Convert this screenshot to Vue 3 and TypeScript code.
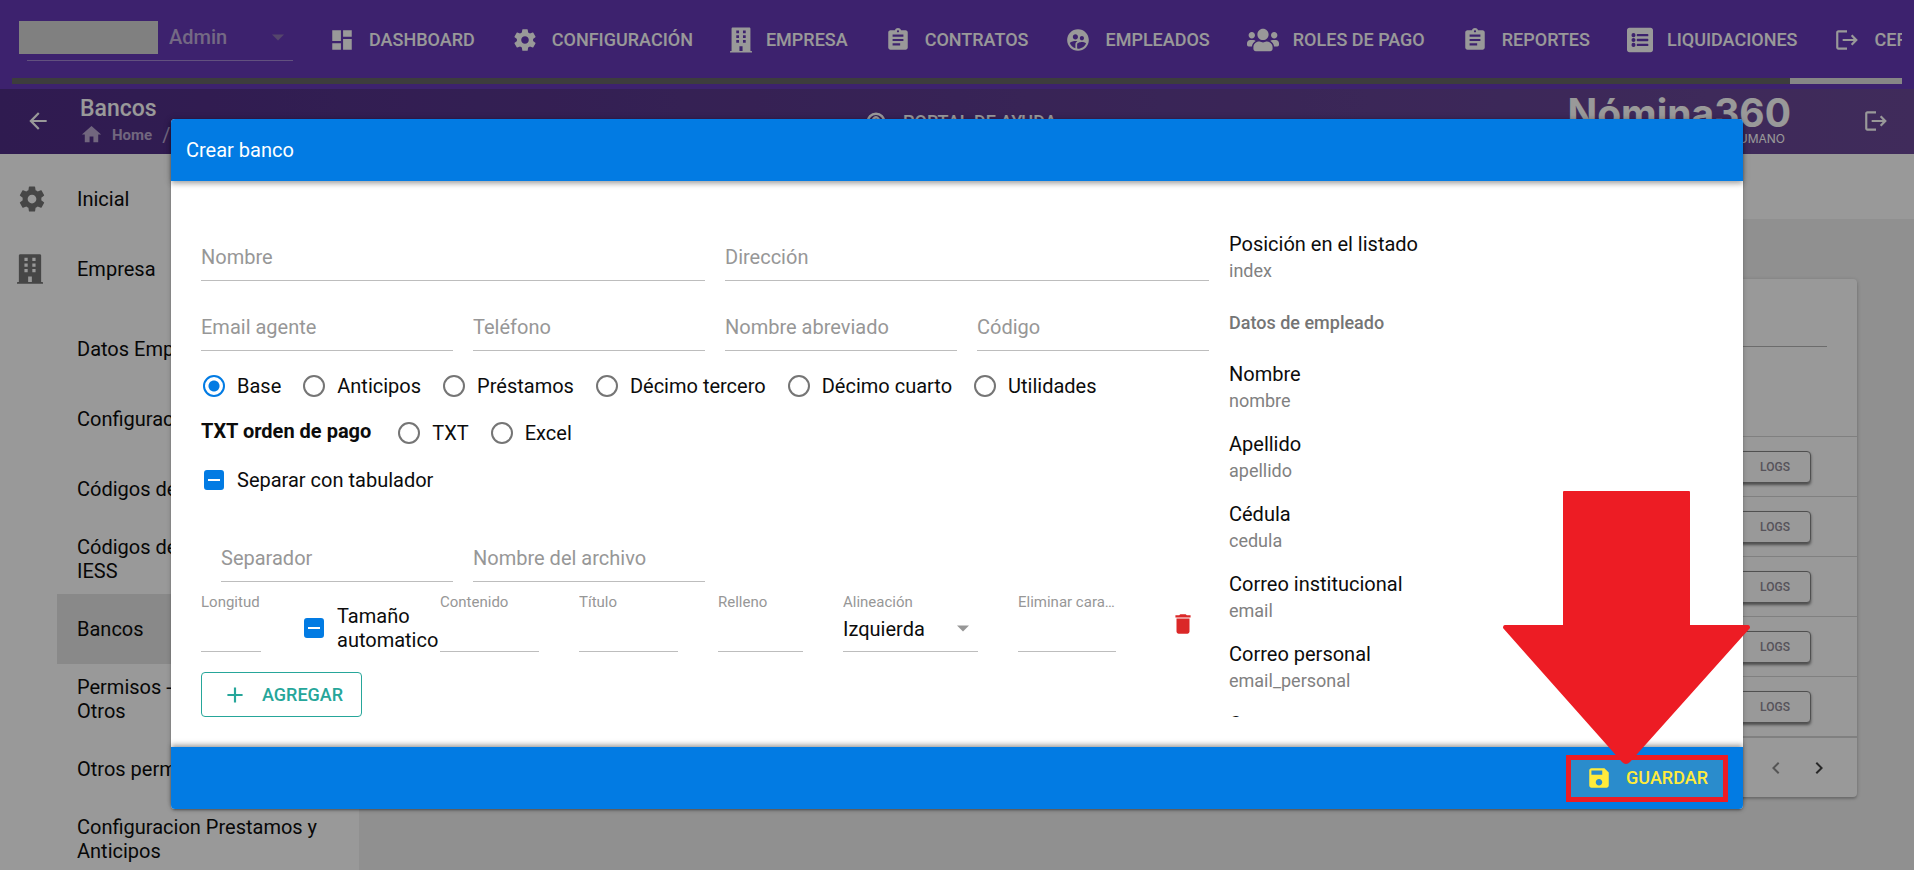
<script setup lang="ts">
import { ref } from 'vue'

interface NavItem {
  label: string
  icon: string
}

interface Shape {
  box: string
  d: string
}

const shapes: Record<string, Shape> = {
  dashboard: { box: '0 0 24 24', d: 'M3 13h8V3H3v10zm0 8h8v-6H3v6zm10 0h8V11h-8v10zm0-18v6h8V3h-8z' },
  settings: {
    box: '0 0 24 24',
    d: 'M19.43 12.98c.04-.32.07-.64.07-.98s-.03-.66-.07-.98l2.11-1.65c.19-.15.24-.42.12-.64l-2-3.46c-.12-.22-.39-.3-.61-.22l-2.49 1c-.52-.4-1.08-.73-1.69-.98l-.38-2.65C14.46 2.18 14.25 2 14 2h-4c-.25 0-.46.18-.49.42l-.38 2.65c-.61.25-1.17.59-1.69.98l-2.49-1c-.23-.09-.49 0-.61.22l-2 3.46c-.13.22-.07.49.12.64l2.11 1.65c-.04.32-.07.65-.07.98s.03.66.07.98l-2.11 1.65c-.19.15-.24.42-.12.64l2 3.46c.12.22.39.3.61.22l2.49-1c.52.4 1.08.73 1.69.98l.38 2.65c.03.24.24.42.49.42h4c.25 0 .46-.18.49-.42l.38-2.65c.61-.25 1.17-.59 1.69-.98l2.49 1c.23.09.49 0 .61-.22l2-3.46c.12-.22.07-.49-.12-.64l-2.11-1.65zM12 15.5c-1.93 0-3.5-1.57-3.5-3.5s1.57-3.5 3.5-3.5 3.5 1.57 3.5 3.5-1.57 3.5-3.5 3.5z',
  },
  building: {
    box: '0 0 448 512',
    d: 'M436 480h-20V24c0-13-11-24-24-24H56C43 0 32 11 32 24v456H12c-7 0-12 5-12 12v20h448v-20c0-7-5-12-12-12zM128 64h56v56h-56zM264 64h56v56h-56zM128 160h56v56h-56zM264 160h56v56h-56zM128 256h56v56h-56zM264 256h56v56h-56zM192 384h64v96h-64z',
  },
  assignment: {
    box: '0 0 24 24',
    d: 'M19 3h-4.18C14.4 1.84 13.3 1 12 1c-1.3 0-2.4.84-2.82 2H5c-1.1 0-2 .9-2 2v14c0 1.1.9 2 2 2h14c1.1 0 2-.9 2-2V5c0-1.1-.9-2-2-2zm-7 0c.55 0 1 .45 1 1s-.45 1-1 1-1-.45-1-1 .45-1 1-1zm2 14H7v-2h7v2zm3-4H7v-2h10v2zm0-4H7V7h10v2z',
  },
  supervised: {
    box: '0 0 24 24',
    d: 'M11.99 2c-5.52 0-10 4.48-10 10s4.48 10 10 10 10-4.48 10-10-4.48-10-10-10zm3.61 6.34c1.07 0 1.93.86 1.93 1.93 0 1.07-.86 1.93-1.93 1.93-1.07 0-1.93-.86-1.93-1.93-.01-1.07.86-1.93 1.93-1.93zm-6-1.58c1.3 0 2.36 1.06 2.36 2.36 0 1.3-1.06 2.36-2.36 2.36s-2.36-1.06-2.36-2.36c0-1.31 1.05-2.36 2.36-2.36zm0 9.13v3.75c-2.4-.75-4.3-2.6-5.14-4.96 1.05-1.12 3.67-1.69 5.14-1.69.53 0 1.2.08 1.9.22-1.64.87-1.9 2.02-1.9 2.68zM11.99 20c-.27 0-.53-.01-.79-.04v-4.07c0-1.42 2.94-2.13 4.4-2.13 1.07 0 2.92.39 3.84 1.15-1.17 2.97-4.06 5.09-7.45 5.09z',
  },
  users: {
    box: '0 0 640 512',
    d: 'M96 224c35.3 0 64-28.7 64-64s-28.7-64-64-64-64 28.7-64 64 28.7 64 64 64zm448 0c35.3 0 64-28.7 64-64s-28.7-64-64-64-64 28.7-64 64 28.7 64 64 64zm32 32h-64c-17.6 0-33.5 7.1-45.1 18.6 40.3 22.1 68.9 62 75.1 109.4h66c17.7 0 32-14.3 32-32v-32c0-35.3-28.7-64-64-64zm-256 0c61.9 0 112-50.1 112-112S381.9 32 320 32 208 82.1 208 144s50.1 112 112 112zm76.8 32h-8.3c-20.8 10-43.9 16-68.5 16s-47.6-6-68.5-16h-8.3C179.6 288 128 339.6 128 403.2V432c0 26.5 21.5 48 48 48h288c26.5 0 48-21.5 48-48v-28.8c0-63.6-51.6-115.2-115.2-115.2zm-223.7-13.4C161.5 263.1 145.6 256 128 256H64c-35.3 0-64 28.7-64 64v32c0 17.7 14.3 32 32 32h65.9c6.3-47.4 34.9-87.3 75.2-109.4z',
  },
  list: {
    box: '0 0 512 512',
    d: 'M464 16H48C21 16 0 37 0 64v384c0 27 21 48 48 48h416c27 0 48-21 48-48V64c0-27-21-48-48-48zM128 120a40 40 0 1 1 0 80a40 40 0 1 1 0-80zM128 216a40 40 0 1 1 0 80a40 40 0 1 1 0-80zM128 312a40 40 0 1 1 0 80a40 40 0 1 1 0-80zM204 136h204c7 0 12 5 12 12v24c0 7-5 12-12 12H204c-7 0-12-5-12-12v-24c0-7 5-12 12-12zM204 232h204c7 0 12 5 12 12v24c0 7-5 12-12 12H204c-7 0-12-5-12-12v-24c0-7 5-12 12-12zM204 328h204c7 0 12 5 12 12v24c0 7-5 12-12 12H204c-7 0-12-5-12-12v-24c0-7 5-12 12-12z',
  },
  logout: {
    box: '0 0 24 24',
    d: 'M17 7l-1.41 1.41L18.17 11H8v2h10.17l-2.58 2.58L17 17l5-5zM4 5h8V3H4c-1.1 0-2 .9-2 2v14c0 1.1.9 2 2 2h8v-2H4V5z',
  },
  home: { box: '0 0 24 24', d: 'M10 20v-6h4v6h5v-8h3L12 3 2 12h3v8z' },
}

const nav: NavItem[] = [
  { label: 'DASHBOARD', icon: 'dashboard' },
  { label: 'CONFIGURACIÓN', icon: 'settings' },
  { label: 'EMPRESA', icon: 'building' },
  { label: 'CONTRATOS', icon: 'assignment' },
  { label: 'EMPLEADOS', icon: 'supervised' },
  { label: 'ROLES DE PAGO', icon: 'users' },
  { label: 'REPORTES', icon: 'assignment' },
  { label: 'LIQUIDACIONES', icon: 'list' },
  { label: 'CERRAR SESIÓN', icon: 'logout' },
]

const sections: NavItem[] = [
  { label: 'Inicial', icon: 'settings' },
  { label: 'Empresa', icon: 'building' },
]

const pages: string[] = [
  'Datos Empresa',
  'Configuraciones',
  'Códigos de cuentas',
  'Códigos de novedades\nIESS',
  'Bancos',
  'Permisos - Vacaciones\nOtros',
  'Otros permisos',
  'Configuracion Prestamos y\nAnticipos',
]

const kinds: string[] = ['Base', 'Anticipos', 'Préstamos', 'Décimo tercero', 'Décimo cuarto', 'Utilidades']
const kind = ref('Base')
const formats: string[] = ['TXT', 'Excel']
const format = ref('')
const tabbed = ref(true)
const autoSize = ref(true)
const alignment = ref('Izquierda')

const employeeFields: { title: string; key: string }[] = [
  { title: 'Nombre', key: 'nombre' },
  { title: 'Apellido', key: 'apellido' },
  { title: 'Cédula', key: 'cedula' },
  { title: 'Correo institucional', key: 'email' },
  { title: 'Correo personal', key: 'email_personal' },
  { title: 'Cargo', key: 'cargo' },
]
</script>

<template>
  <div class="page">
    <header class="top">
      <div class="top-row">
        <div class="account">
          <select aria-label="Empresa activa">
            <option>Admin</option>
          </select>
          <svg class="caret" viewBox="0 0 14 7"><path d="M0 0h14L7 7z" /></svg>
          <span class="masked"></span>
        </div>
        <nav>
          <a v-for="item in nav" :key="item.label" href="#" class="nav-item">
            <svg :class="['icon', item.icon]" :viewBox="shapes[item.icon].box">
              <path fill-rule="evenodd" :d="shapes[item.icon].d" />
            </svg>
            <span>{{ item.label }}</span>
          </a>
        </nav>
      </div>
      <div class="track"><div class="thumb"></div></div>
    </header>

    <div class="bar">
      <button class="plain back" aria-label="Volver">
        <svg class="icon" viewBox="0 0 24 24"><path d="M20 11H7.83l5.59-5.59L12 4l-8 8 8 8 1.41-1.41L7.83 13H20v-2z" /></svg>
      </button>
      <div class="titles">
        <h1>Bancos</h1>
        <div class="crumbs">
          <svg class="house" :viewBox="shapes.home.box"><path :d="shapes.home.d" /></svg>
          <a href="#">Home</a>
          <span class="slash">/</span>
        </div>
      </div>
      <a href="#" class="help">
        <svg class="help-icon" viewBox="0 0 24 24">
          <circle cx="12" cy="12" r="10" fill="none" stroke="currentColor" stroke-width="3" />
          <path d="M8.5 10a3.5 3.5 0 1 1 5.400 2.900c-1.200.8-1.900 1.200-1.900 2.600" fill="none" stroke="currentColor" stroke-width="3" />
          <circle cx="12" cy="18" r="1.400" />
        </svg>
        <span>PORTAL DE AYUDA</span>
      </a>
      <div class="logo">
        <strong>Nómina360</strong>
        <small>TALENTO HUMANO</small>
      </div>
      <button class="plain" aria-label="Salir">
        <svg class="icon" :viewBox="shapes.logout.box"><path :d="shapes.logout.d" /></svg>
      </button>
    </div>

    <div class="below">
      <aside>
        <a v-for="s in sections" :key="s.label" href="#" class="section">
          <svg :class="['side-icon', s.icon]" :viewBox="shapes[s.icon].box"><path fill-rule="evenodd" :d="shapes[s.icon].d" /></svg>
          <span>{{ s.label }}</span>
        </a>
        <div class="pages">
          <a v-for="p in pages" :key="p" href="#" :class="['page-link', { active: p === 'Bancos' }]">{{ p }}</a>
        </div>
      </aside>
      <main>
        <div class="strip"></div>
        <section class="card">
          <div class="search"></div>
          <table>
            <thead><tr><th></th></tr></thead>
            <tbody>
              <tr v-for="n in 5" :key="n">
                <td><button class="logs">LOGS</button></td>
              </tr>
            </tbody>
          </table>
          <div class="pager">
            <button class="plain dim" aria-label="Página anterior"><svg viewBox="0 0 24 24"><path d="M15.410 7.410L14 6l-6 6 6 6 1.410-1.410L10.830 12z" /></svg></button>
            <button class="plain" aria-label="Página siguiente"><svg viewBox="0 0 24 24"><path d="M10 6L8.590 7.410 13.170 12l-4.580 4.590L10 18l6-6z" /></svg></button>
          </div>
        </section>
      </main>
    </div>

    <div class="backdrop">
      <form class="modal" role="dialog" aria-labelledby="modal-title" @submit.prevent>
        <div class="modal-head"><h2 id="modal-title">Crear banco</h2></div>
        <div class="modal-body">
          <div class="left">
            <div class="four">
              <div class="field wide"><label for="f-name">Nombre</label><input id="f-name" type="text" /></div>
              <div class="field wide inset"><label for="f-addr">Dirección</label><input id="f-addr" type="text" /></div>
              <div class="field"><label for="f-mail">Email agente</label><input id="f-mail" type="text" /></div>
              <div class="field inset"><label for="f-tel">Teléfono</label><input id="f-tel" type="text" /></div>
              <div class="field inset"><label for="f-abbr">Nombre abreviado</label><input id="f-abbr" type="text" /></div>
              <div class="field inset"><label for="f-code">Código</label><input id="f-code" type="text" /></div>
            </div>
            <div class="options">
              <div class="option-row">
                <label v-for="k in kinds" :key="k" class="option">
                  <input v-model="kind" type="radio" name="kind" :value="k" />{{ k }}
                </label>
              </div>
              <div class="option-row">
                <strong class="order">TXT orden de pago</strong>
                <label v-for="f in formats" :key="f" class="option">
                  <input v-model="format" type="radio" name="format" :value="f" />{{ f }}
                </label>
              </div>
              <div class="option-row">
                <label class="option"><input v-model="tabbed" type="checkbox" />Separar con tabulador</label>
              </div>
            </div>
            <div class="four">
              <div class="field inset"><label for="f-sep">Separador</label><input id="f-sep" type="text" /></div>
              <div class="field inset"><label for="f-file">Nombre del archivo</label><input id="f-file" type="text" /></div>
            </div>
            <div class="detail">
              <div class="field small"><label for="d-len">Longitud</label><input id="d-len" type="text" /></div>
              <label class="option auto"><input v-model="autoSize" type="checkbox" /><span>Tamaño automatico</span></label>
              <div class="field small"><label for="d-con">Contenido</label><input id="d-con" type="text" /></div>
              <div class="field small"><label for="d-tit">Título</label><input id="d-tit" type="text" /></div>
              <div class="field small"><label for="d-fill">Relleno</label><input id="d-fill" type="text" /></div>
              <div class="field small">
                <label for="d-al">Alineación</label>
                <select id="d-al" v-model="alignment"><option>Izquierda</option><option>Derecha</option></select>
                <svg class="caret" viewBox="0 0 14 7"><path d="M0 0h14L7 7z" /></svg>
              </div>
              <div class="field small"><label for="d-del">Eliminar caracteres</label><input id="d-del" type="text" /></div>
              <button type="button" class="plain trash" aria-label="Eliminar fila">
                <svg class="icon" viewBox="0 0 24 24"><path d="M6 19c0 1.100.9 2 2 2h8c1.100 0 2-.9 2-2V7H6v12zM19 4h-3.500l-1-1h-5l-1 1H5v2h14V4z" /></svg>
              </button>
            </div>
            <button type="button" class="add">
              <svg class="icon" viewBox="0 0 24 24"><path d="M19 13h-6v6h-2v-6H5v-2h6V5h2v6h6v2z" /></svg>
              <span>AGREGAR</span>
            </button>
          </div>
          <div class="keys">
            <div class="key"><div class="key-title">Posición en el listado</div><div class="key-name">index</div></div>
            <div class="key-head">Datos de empleado</div>
            <div v-for="f in employeeFields" :key="f.key" class="key">
              <div class="key-title">{{ f.title }}</div>
              <div class="key-name">{{ f.key }}</div>
            </div>
          </div>
        </div>
        <div class="modal-foot">
          <button type="submit" class="save">
            <svg class="icon" viewBox="0 0 24 24"><path fill-rule="evenodd" d="M17 3H5c-1.110 0-2 .9-2 2v14c0 1.100.89 2 2 2h14c1.100 0 2-.9 2-2V7l-4-4zm-5 16c-1.660 0-3-1.340-3-3s1.340-3 3-3 3 1.340 3 3-1.340 3-3 3zm3-10H5V5h10v4z" /></svg>
            <span>GUARDAR</span>
          </button>
          <svg class="pointer" viewBox="0 0 247 273">
            <path d="M61 0h125q1 0 1 1v133h58q2 0 2 3L127 271q-4 4-8 0L0 137q0-3 2-3h58V1q0-1 1-1z" />
          </svg>
        </div>
      </form>
    </div>
  </div>
</template>

<style>
body {
  margin: 0;
}
</style>

<style scoped>
* {
  box-sizing: border-box;
}
.page {
  position: relative;
  display: flex;
  flex-direction: column;
  height: 100vh;
  overflow: hidden;
  background: #f1f1f1;
  color: #0c0c0c;
  font-family: Roboto, "Liberation Sans", sans-serif;
  font-size: 20px;
  line-height: 24px;
}
svg {
  display: block;
  flex: none;
  fill: currentColor;
}
a {
  color: inherit;
  text-decoration: none;
}
button,
input,
select {
  font: inherit;
  color: inherit;
}
h1,
h2 {
  margin: 0;
}
.icon {
  width: 26px;
  height: 26px;
}
.icon.users {
  width: 32px;
}
.icon.building {
  width: 22px;
}
.plain {
  padding: 0;
  border: 0;
  background: none;
}

/* top navigation */
.top {
  flex: none;
  padding: 0 12px 5px;
  background: #673ab7;
  color: #fff;
}
.top-row {
  display: flex;
  align-items: center;
  gap: 36px;
  height: 78px;
}
.account {
  position: relative;
  flex: none;
  width: 266px;
  margin: 0 0 4px 15px;
}
.account select {
  display: block;
  width: 100%;
  height: 48px;
  padding: 0 0 0 142px;
  border: 0;
  border-bottom: 1px solid rgba(255, 255, 255, 0.4);
  appearance: none;
  background: none;
  color: #c1b0dc;
  font-weight: 500;
}
.caret {
  position: absolute;
  right: 9px;
  width: 12px;
  height: 7px;
  pointer-events: none;
}
.account .caret {
  top: 21px;
  fill: #8e75b4;
}
.masked {
  position: absolute;
  top: 8px;
  left: -8px;
  width: 139px;
  height: 33px;
  background: #d5d5d5;
}
nav {
  display: flex;
  flex: 1;
  gap: 37px;
  min-width: 0;
  padding-top: 2px;
  overflow: hidden;
}
.nav-item {
  display: flex;
  flex: none;
  align-items: center;
  gap: 14px;
  font-size: 18px;
  font-weight: 500;
  white-space: nowrap;
}
.track {
  height: 6px;
  background: #666;
}
.thumb {
  width: 112px;
  height: 6px;
  margin-left: auto;
  background: #dfdfdf;
}

/* title bar */
.bar {
  display: flex;
  flex: none;
  align-items: center;
  height: 65px;
  padding: 0 25px 2px;
  background: linear-gradient(90deg, #4f2d86, #6b4998);
  color: #fff;
}
.titles {
  flex: none;
  width: 786px;
  margin-left: 29px;
}
h1 {
  font-size: 23px;
  font-weight: 500;
  line-height: 28px;
}
.crumbs {
  display: flex;
  align-items: center;
  color: #bdabd3;
  font-size: 15px;
  font-weight: 700;
}
.house {
  width: 23px;
  height: 23px;
  margin-right: 9px;
}
.slash {
  margin: 0 10px;
  font-size: 20px;
  font-weight: 400;
}
.help {
  display: flex;
  align-items: center;
  gap: 17px;
  padding-top: 2px;
  font-size: 18px;
  font-weight: 500;
}
.help-icon {
  width: 20px;
  height: 20px;
}
.logo {
  display: flex;
  flex-direction: column;
  align-items: flex-end;
  margin: 0 72px 4px auto;
}
.logo strong {
  font-family: Inter, sans-serif;
  font-size: 39px;
  font-weight: 700;
  line-height: 40px;
}
.logo small {
  padding-right: 6px;
  font-family: Inter, sans-serif;
  font-size: 12px;
  line-height: 12px;
}

/* side menu */
.below {
  display: flex;
  flex: 1;
  min-height: 0;
}
aside {
  flex: none;
  width: 359px;
  padding-top: 10px;
  background: #fff;
}
.section {
  display: flex;
  align-items: center;
  height: 70px;
  padding-left: 17px;
}
.section span {
  margin-left: 30px;
}
.side-icon {
  width: 30px;
  height: 30px;
  fill: #757575;
}
.side-icon.building {
  width: 26px;
  margin-right: 4px;
}
.pages {
  padding: 10px 0 0 57px;
}
.page-link {
  display: flex;
  align-items: center;
  height: 70px;
  padding: 0 20px;
  white-space: pre-line;
}
.page-link.active {
  background: #e4e4e4;
}

/* bank table */
main {
  flex: 1;
  min-width: 0;
}
.strip {
  height: 65px;
  background: #fff;
}
.card {
  margin: 60px 57px 0;
  border-radius: 4px;
  background: #fff;
  box-shadow: 0 1px 5px rgba(0, 0, 0, 0.2), 0 2px 2px rgba(0, 0, 0, 0.14);
}
.search {
  height: 68px;
  margin: 0 30px;
  border-bottom: 1px solid #b4b4b4;
}
table {
  width: 100%;
  border-collapse: collapse;
}
th {
  height: 89px;
  padding: 0;
}
td {
  height: 60px;
  padding: 1px 46px 0 0;
  border-top: 1px solid #d6d6d6;
}
.logs {
  display: block;
  width: 72px;
  height: 32px;
  margin-left: auto;
  padding: 0;
  border: 1px solid #858585;
  border-radius: 4px;
  background: #fff;
  box-shadow: 0 2px 3px rgba(0, 0, 0, 0.5);
  color: #8f8a96;
  font-size: 12px;
  font-weight: 500;
}
.pager {
  display: flex;
  align-items: center;
  justify-content: flex-end;
  gap: 19px;
  height: 61px;
  padding-right: 26px;
  border-top: 2px solid #d6d6d6;
  color: #444;
}
.pager svg {
  width: 24px;
  height: 24px;
}
.dim {
  opacity: 0.6;
}

/* dialog */
.backdrop {
  position: absolute;
  inset: 0;
  padding: 119px 171px 0;
  background: rgba(0, 0, 0, 0.4);
}
.modal {
  border-radius: 4px;
  background: #fff;
  box-shadow: 0 1px 5px rgba(0, 0, 0, 0.2), 0 2px 2px rgba(0, 0, 0, 0.14), 0 3px 1px -2px rgba(0, 0, 0, 0.12);
}
.modal-head,
.modal-foot {
  position: relative;
  display: flex;
  align-items: center;
  height: 62px;
  padding: 0 15px;
  background: #027be3;
}
.modal-head {
  border-radius: 4px 4px 0 0;
  box-shadow: 0 2px 4px -1px rgba(0, 0, 0, 0.2), 0 4px 5px rgba(0, 0, 0, 0.14), 0 1px 10px rgba(0, 0, 0, 0.12);
  color: #fff;
}
h2 {
  font-size: 20px;
  font-weight: 400;
}
.modal-body {
  display: grid;
  grid-template-columns: 2fr 1fr;
  padding: 30px;
}
.left {
  min-width: 0;
}
.four {
  display: grid;
  grid-template-columns: repeat(4, 1fr);
}
.field {
  position: relative;
  min-width: 0;
  height: 70px;
}
.wide {
  grid-column: span 2;
}
.inset {
  margin-left: 20px;
}
.field label {
  position: absolute;
  top: 34px;
  left: 0;
  right: 0;
  overflow: hidden;
  color: #979797;
  text-overflow: ellipsis;
  white-space: nowrap;
  pointer-events: none;
}
.small label {
  top: 11px;
  font-size: 15px;
  line-height: 18px;
}
.field input,
.field select {
  display: block;
  width: 100%;
  height: 70px;
  padding: 24px 0 0;
  border: 0;
  border-bottom: 1px solid #bdbdbd;
  border-radius: 0;
  outline: 0;
  appearance: none;
  background: none;
}
.field .caret {
  top: 43px;
  fill: #979797;
}
.options {
  padding: 11px 0 9px;
}
.option-row {
  display: flex;
  align-items: center;
  gap: 20px;
  height: 47px;
}
.order {
  margin-right: 5px;
  padding-bottom: 3px;
  font-weight: 700;
}
.option {
  display: flex;
  align-items: center;
  gap: 12px;
}
.option input {
  flex: none;
  width: 22px;
  height: 22px;
  margin: 0 0 0 2px;
  border: 2px solid #757575;
  border-radius: 50%;
  appearance: none;
}
.option input:checked {
  border-color: #027be3;
  background: radial-gradient(circle, #027be3 5px, transparent 6px);
}
.option input[type='checkbox'] {
  display: grid;
  place-items: center;
  width: 20px;
  height: 20px;
  margin: 0 1px 0 3px;
  border-radius: 3px;
}
.option input[type='checkbox']:checked {
  background: #027be3;
}
.option input[type='checkbox']:checked::after {
  content: '';
  width: 12px;
  height: 2px;
  background: #fff;
}
.detail {
  display: grid;
  grid-template-columns: 60fr 99fr 99fr 99fr 85fr 135fr 98fr 53fr;
  column-gap: 40px;
}
.auto {
  min-width: 0;
  padding-top: 22px;
}
.trash {
  justify-self: center;
  padding-top: 14px;
  color: #db2828;
}
.add {
  display: flex;
  align-items: center;
  gap: 14px;
  height: 45px;
  margin-top: 20px;
  padding: 0 18px 0 20px;
  border: 1px solid #26a69a;
  border-radius: 4px;
  background: none;
  color: #26a69a;
  font-size: 18px;
  font-weight: 500;
}
.keys {
  height: 0;
  min-height: 100%;
  padding: 12px 0 0 20px;
  overflow: hidden;
}
.key {
  height: 70px;
  padding-top: 9px;
}
.key-name {
  margin-top: 4px;
  color: #818181;
  font-size: 18px;
  line-height: 22px;
}
.key-head {
  color: #757575;
  font-size: 18px;
  font-weight: 500;
  line-height: 60px;
}
.modal-foot {
  justify-content: flex-end;
  border-radius: 0 0 4px 4px;
  box-shadow: 0 -2px 4px -1px rgba(0, 0, 0, 0.3), 0 -4px 5px rgba(0, 0, 0, 0.14);
}
.save {
  display: flex;
  align-items: center;
  gap: 14px;
  height: 47px;
  padding: 0 15px;
  border: 5px solid #ed1c24;
  background: #2a8ccc;
  color: #ffeb3b;
  font-size: 18px;
  font-weight: 500;
}
.pointer {
  position: absolute;
  right: -7px;
  bottom: 45px;
  width: 247px;
  height: 273px;
  fill: #ed1c24;
}
</style>
